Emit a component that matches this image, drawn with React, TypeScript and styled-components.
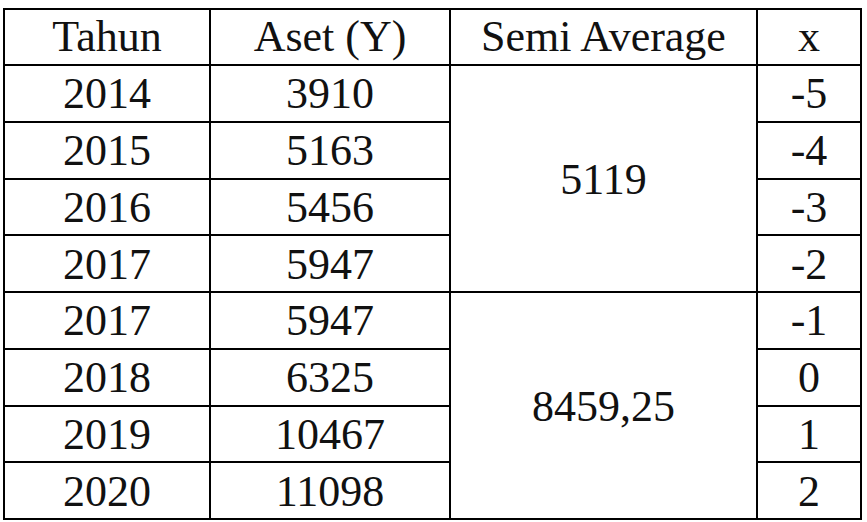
import styled, { createGlobalStyle } from 'styled-components';

const GlobalStyle = createGlobalStyle`
  html, body {
    margin: 0;
    padding: 0;
    background: #fff;
    overflow: hidden;
  }
`;

const Page = styled.div`
  display: flex;
  flex-direction: column;
  padding: 8px 0 0 3px;
  font-family: 'Liberation Serif', 'Times New Roman', serif;
  color: #111;
`;

const Table = styled.table`
  border-collapse: collapse;
  table-layout: fixed;
  width: 857px;
  font-size: 44px;
  line-height: 1;
`;

const Row = styled.tr<{ $header?: boolean }>`
  height: ${(p) => (p.$header ? '56px' : '56.75px')};
`;

const Cell = styled.td`
  border: 2px solid #000;
  padding: 2px 0 0;
  text-align: center;
  vertical-align: middle;
  white-space: nowrap;
`;

const HeadCell = styled(Cell).attrs({ as: 'th' })`
  font-weight: normal;
  padding: 0;
`;

const rows = [
  { year: 2014, aset: '3910', x: '-5' },
  { year: 2015, aset: '5163', x: '-4' },
  { year: 2016, aset: '5456', x: '-3' },
  { year: 2017, aset: '5947', x: '-2' },
  { year: 2017, aset: '5947', x: '-1' },
  { year: 2018, aset: '6325', x: '0' },
  { year: 2019, aset: '10467', x: '1' },
  { year: 2020, aset: '11098', x: '2' },
];

// semi average spans each half of the data
const averages: Record<number, string> = { 0: '5119', 4: '8459,25' };

export default function App() {
  return (
    <Page>
      <GlobalStyle />
      <Table>
        <colgroup>
          <col style={{ width: 206 }} />
          <col style={{ width: 240 }} />
          <col style={{ width: 307 }} />
          <col style={{ width: 104 }} />
        </colgroup>
        <thead>
          <Row $header>
            <HeadCell>Tahun</HeadCell>
            <HeadCell>Aset (Y)</HeadCell>
            <HeadCell>Semi Average</HeadCell>
            <HeadCell>x</HeadCell>
          </Row>
        </thead>
        <tbody>
          {rows.map((r, i) => (
            <Row key={i}>
              <Cell>{r.year}</Cell>
              <Cell>{r.aset}</Cell>
              {averages[i] !== undefined && <Cell rowSpan={4}>{averages[i]}</Cell>}
              <Cell>{r.x}</Cell>
            </Row>
          ))}
        </tbody>
      </Table>
    </Page>
  );
}
